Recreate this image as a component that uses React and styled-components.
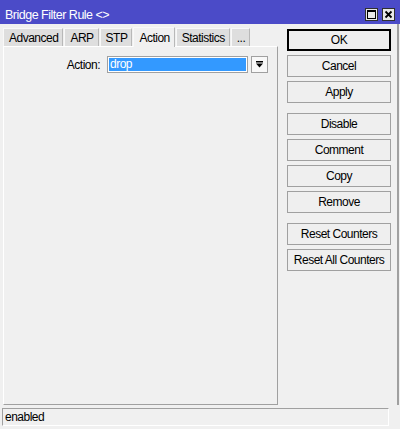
import React from 'react';
import styled, { createGlobalStyle } from 'styled-components';

const GlobalStyle = createGlobalStyle`
  body {
    margin: 0;
    background: #f0f0f0;
    font-family: "Liberation Sans", Arial, sans-serif;
    font-size: 12px;
    letter-spacing: -0.5px;
  }
`;

const tabs = ['Advanced', 'ARP', 'STP', 'Action', 'Statistics', '...'];

const buttonGroups = [
  ['OK', 'Cancel', 'Apply'],
  ['Disable', 'Comment', 'Copy', 'Remove'],
  ['Reset Counters', 'Reset All Counters'],
];

function App() {
  return (
    <>
      <GlobalStyle />
      <Window>
        <TitleBar>
          <Title>Bridge Filter Rule &lt;&gt;</Title>
          <TitleButtons>
            <TitleButton>
              <svg width="11" height="11" viewBox="0 0 11 11">
                <rect x="1.5" y="1.5" width="8" height="8" fill="none" stroke="#000" strokeWidth="1" />
                <rect x="1" y="1" width="9" height="2" fill="#000" />
              </svg>
            </TitleButton>
            <TitleButton>
              <svg width="11" height="11" viewBox="0 0 11 11">
                <path d="M2.5 2.5 L8.5 8.5 M8.5 2.5 L2.5 8.5" stroke="#000" strokeWidth="1.8" />
              </svg>
            </TitleButton>
          </TitleButtons>
        </TitleBar>

        <Main>
          <LeftPane>
            <TabRow>
              {tabs.map(t => (
                <Tab key={t} active={t === 'Action'}>{t}</Tab>
              ))}
            </TabRow>
            <Panel>
              <FieldRow>
                <Label>Action:</Label>
                <Select>
                  <SelectValue>drop</SelectValue>
                </Select>
                <DropButton>
                  <svg width="9" height="9" viewBox="0 0 9 9">
                    <rect x="1" y="1" width="7" height="1.5" fill="#000" />
                    <path d="M1 3.5 H8 L4.5 7.5 Z" fill="#000" />
                  </svg>
                </DropButton>
              </FieldRow>
            </Panel>
          </LeftPane>

          <RightPane>
            {buttonGroups.map((group, i) => (
              <ButtonGroup key={i}>
                {group.map(b => (
                  <Button key={b} primary={b === 'OK'}>{b}</Button>
                ))}
              </ButtonGroup>
            ))}
          </RightPane>
        </Main>

        <StatusBar>enabled</StatusBar>
      </Window>
    </>
  );
}

export default App;

const Window = styled.div`
  width: 400px;
  height: 429px;
  display: flex;
  flex-direction: column;
  background: #f0f0f0;
  overflow: hidden;
`;

const TitleBar = styled.div`
  height: 24px;
  flex-shrink: 0;
  background: #4b4bc8;
  display: flex;
  align-items: center;
  justify-content: space-between;
  padding: 0 5px 0 5px;
  box-sizing: border-box;
`;

const Title = styled.span`
  color: #ffffff;
  font-size: 12.5px;
  padding-top: 5px;
`;

const TitleButtons = styled.div`
  display: flex;
  gap: 4px;
  padding-top: 4px;
`;

const TitleButton = styled.div`
  width: 13px;
  height: 13px;
  box-sizing: border-box;
  border: 1px solid #303030;
  background: #e8e8e8;
  display: flex;
  align-items: center;
  justify-content: center;
`;

const Main = styled.div`
  flex: 1;
  display: flex;
  padding-left: 3px;
  border-right: 2px solid #a0a0a0;
  margin-right: 1px;
`;

const LeftPane = styled.div`
  width: 275px;
  display: flex;
  flex-direction: column;
  padding-top: 2px;
`;

const TabRow = styled.div`
  height: 20px;
  display: flex;
  align-items: flex-end;
  gap: 1px;
`;

const Tab = styled.div`
  height: ${p => (p.active ? '20px' : '18px')};
  box-sizing: border-box;
  padding: 0 4px 0 5px;
  display: flex;
  align-items: center;
  background: ${p => (p.active ? '#f0f0f0' : '#dedede')};
  border-top: 1px solid #f8f8f8;
  border-left: 1px solid #f8f8f8;
  border-right: 1px solid #b8b8b8;
  color: #000;
  margin-bottom: ${p => (p.active ? '-1px' : '0')};
  position: relative;
  z-index: ${p => (p.active ? 1 : 0)};
`;

const Panel = styled.div`
  height: 359px;
  box-sizing: border-box;
  border-top: 1px solid #ffffff;
  border-left: 1px solid #ffffff;
  border-right: 1px solid #a0a0a0;
  border-bottom: 1px solid #a0a0a0;
  padding-top: 9px;
`;

const FieldRow = styled.div`
  display: flex;
  align-items: center;
`;

const Label = styled.div`
  width: 96px;
  text-align: right;
  margin-right: 7px;
`;

const Select = styled.div`
  width: 141px;
  height: 17px;
  box-sizing: border-box;
  border: 1px solid #a0a0a0;
  background: #ffffff;
  padding: 1px;
`;

const SelectValue = styled.div`
  height: 100%;
  background: #3399ff;
  color: #ffffff;
  line-height: 13px;
  padding-left: 1px;
`;

const DropButton = styled.div`
  margin-left: 3px;
  width: 17px;
  height: 17px;
  box-sizing: border-box;
  border: 1px solid #a0a0a0;
  background: #f8f8f8;
  display: flex;
  align-items: center;
  justify-content: center;
`;

const RightPane = styled.div`
  margin-left: 9px;
  padding-top: 5px;
  display: flex;
  flex-direction: column;
  gap: 10px;
`;

const ButtonGroup = styled.div`
  display: flex;
  flex-direction: column;
  gap: 4px;
`;

const Button = styled.div`
  width: 104px;
  height: 22px;
  box-sizing: border-box;
  border: 1px solid ${p => (p.primary ? '#000000' : '#a0a0a0')};
  box-shadow: ${p => (p.primary ? 'inset 0 0 0 1px #000' : 'none')};
  background: #efefef;
  display: flex;
  align-items: center;
  justify-content: center;
  color: #000;
`;

const StatusBar = styled.div`
  height: 18px;
  margin: 3px 11px 3px 2px;
  box-sizing: border-box;
  border-top: 1px solid #a0a0a0;
  border-left: 1px solid #a0a0a0;
  border-right: 1px solid #ffffff;
  border-bottom: 1px solid #ffffff;
  padding-left: 2px;
  display: flex;
  align-items: center;
`;
